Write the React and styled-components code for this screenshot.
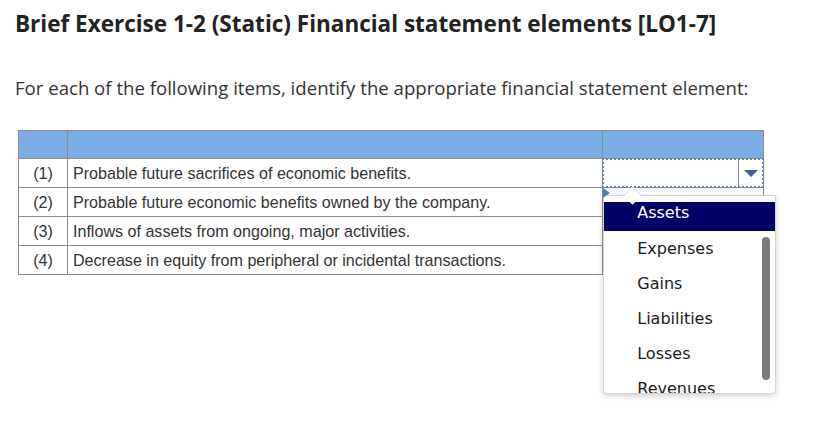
import React, { useState } from 'react'
import styled, { createGlobalStyle } from 'styled-components'

const GlobalStyle = createGlobalStyle`
  html, body {
    margin: 0;
    padding: 0;
    background: #ffffff;
  }
  * {
    box-sizing: border-box;
  }
`

const Page = styled.div`
  min-height: 431px;
  padding: 9px 15px 0 15px;
  font-family: "Open Sans", Lato, sans-serif;
  color: #222222;
`

const Title = styled.h1`
  margin: 0;
  font-size: 22.5px;
  font-weight: 700;
  line-height: 30px;
  color: #222222;
`

const Prompt = styled.p`
  margin: 37px 0 0 0;
  font-size: 18.6px;
  line-height: 24px;
  color: #333333;
`

const Grid = styled.table`
  margin: 30px 0 0 3px;
  border-collapse: collapse;
  width: 746px;
  font-family: "Liberation Sans", Arial, sans-serif;
  font-size: 16.1px;
  color: #333333;
`

const HeadCell = styled.th`
  height: 28px;
  padding: 0;
  background: #7aade5;
  border: 1px solid #8c8c8c;
  width: ${props => props.w}px;
`

const Cell = styled.td`
  height: 29px;
  padding: 0 5px;
  border: 1px solid #8c8c8c;
  text-align: ${props => (props.center ? 'center' : 'left')};
  vertical-align: middle;
`

const SelectCell = styled.td`
  position: relative;
  height: 29px;
  padding: 0;
  border: 1px solid #8c8c8c;
`

const SelectBox = styled.div`
  position: absolute;
  inset: -1px;
  border: 2px dotted #5f82b3;
  display: flex;
  justify-content: flex-end;
  z-index: 3;
`

const ArrowButton = styled.div`
  width: 24px;
  border-left: 1px solid #7f8fa6;
  display: flex;
  align-items: center;
  justify-content: center;
`

const Caret = styled.div`
  width: 0;
  height: 0;
  border-left: 7px solid transparent;
  border-right: 7px solid transparent;
  border-top: 7px solid #3f5f9c;
`

const Marker = styled.div`
  position: absolute;
  left: 0;
  top: 29px;
  width: 0;
  height: 0;
  border-top: 5px solid transparent;
  border-bottom: 5px solid transparent;
  border-left: 7px solid #4d7cc2;
  z-index: 6;
`

const Menu = styled.ul`
  position: absolute;
  left: 0;
  top: 36px;
  width: 173px;
  height: 199px;
  margin: 0;
  padding: 0;
  list-style: none;
  background: #ffffff;
  border: 1px solid #d4d4d4;
  border-radius: 0 0 4px 4px;
  box-shadow: 0 2px 6px rgba(0, 0, 0, 0.18);
  overflow: hidden;
  font-family: "DejaVu Sans", Verdana, sans-serif;
  font-size: 16px;
  color: #1a1a1a;
  z-index: 5;
`

const Notch = styled.div`
  position: absolute;
  left: 23px;
  top: 30px;
  width: 13px;
  height: 13px;
  background: #ffffff;
  border-left: 1px solid #e2e2e2;
  border-top: 1px solid #e2e2e2;
  transform: rotate(45deg);
  z-index: 6;
`

const Option = styled.li`
  height: ${props => (props.active ? 29 : 35)}px;
  margin-top: ${props => (props.active ? 6 : 0)}px;
  line-height: ${props => (props.active ? 22 : 35)}px;
  padding-left: 33px;
  background: ${props => (props.active ? '#000066' : 'transparent')};
  color: ${props => (props.active ? '#ffffff' : '#1a1a1a')};
  white-space: nowrap;
`

const ScrollThumb = styled.div`
  position: absolute;
  right: 5px;
  top: 41px;
  width: 8px;
  height: 143px;
  border-radius: 4px;
  background: #7b7b7b;
`

const items = [
  'Probable future sacrifices of economic benefits.',
  'Probable future economic benefits owned by the company.',
  'Inflows of assets from ongoing, major activities.',
  'Decrease in equity from peripheral or incidental transactions.',
]

const options = ['Assets', 'Expenses', 'Gains', 'Liabilities', 'Losses', 'Revenues']

const App = () => {
  const [open] = useState(true)

  return (
    <Page>
      <GlobalStyle />
      <Title>Brief Exercise 1-2 (Static) Financial statement elements [LO1-7]</Title>
      <Prompt>For each of the following items, identify the appropriate financial statement element:</Prompt>
      <Grid>
        <thead>
          <tr>
            <HeadCell w={49} />
            <HeadCell w={536} />
            <HeadCell w={161} />
          </tr>
        </thead>
        <tbody>
          {items.map((text, i) => (
            <tr key={i}>
              <Cell center>({i + 1})</Cell>
              <Cell>{text}</Cell>
              {i === 0 ? (
                <SelectCell>
                  <SelectBox>
                    <ArrowButton>
                      <Caret />
                    </ArrowButton>
                  </SelectBox>
                  {open && (
                    <>
                      <Marker />
                      <Notch />
                      <Menu>
                        {options.map((opt, j) => (
                          <Option key={opt} active={j === 0}>{opt}</Option>
                        ))}
                        <ScrollThumb />
                      </Menu>
                    </>
                  )}
                </SelectCell>
              ) : (
                <Cell />
              )}
            </tr>
          ))}
        </tbody>
      </Grid>
    </Page>
  )
}

export default App
